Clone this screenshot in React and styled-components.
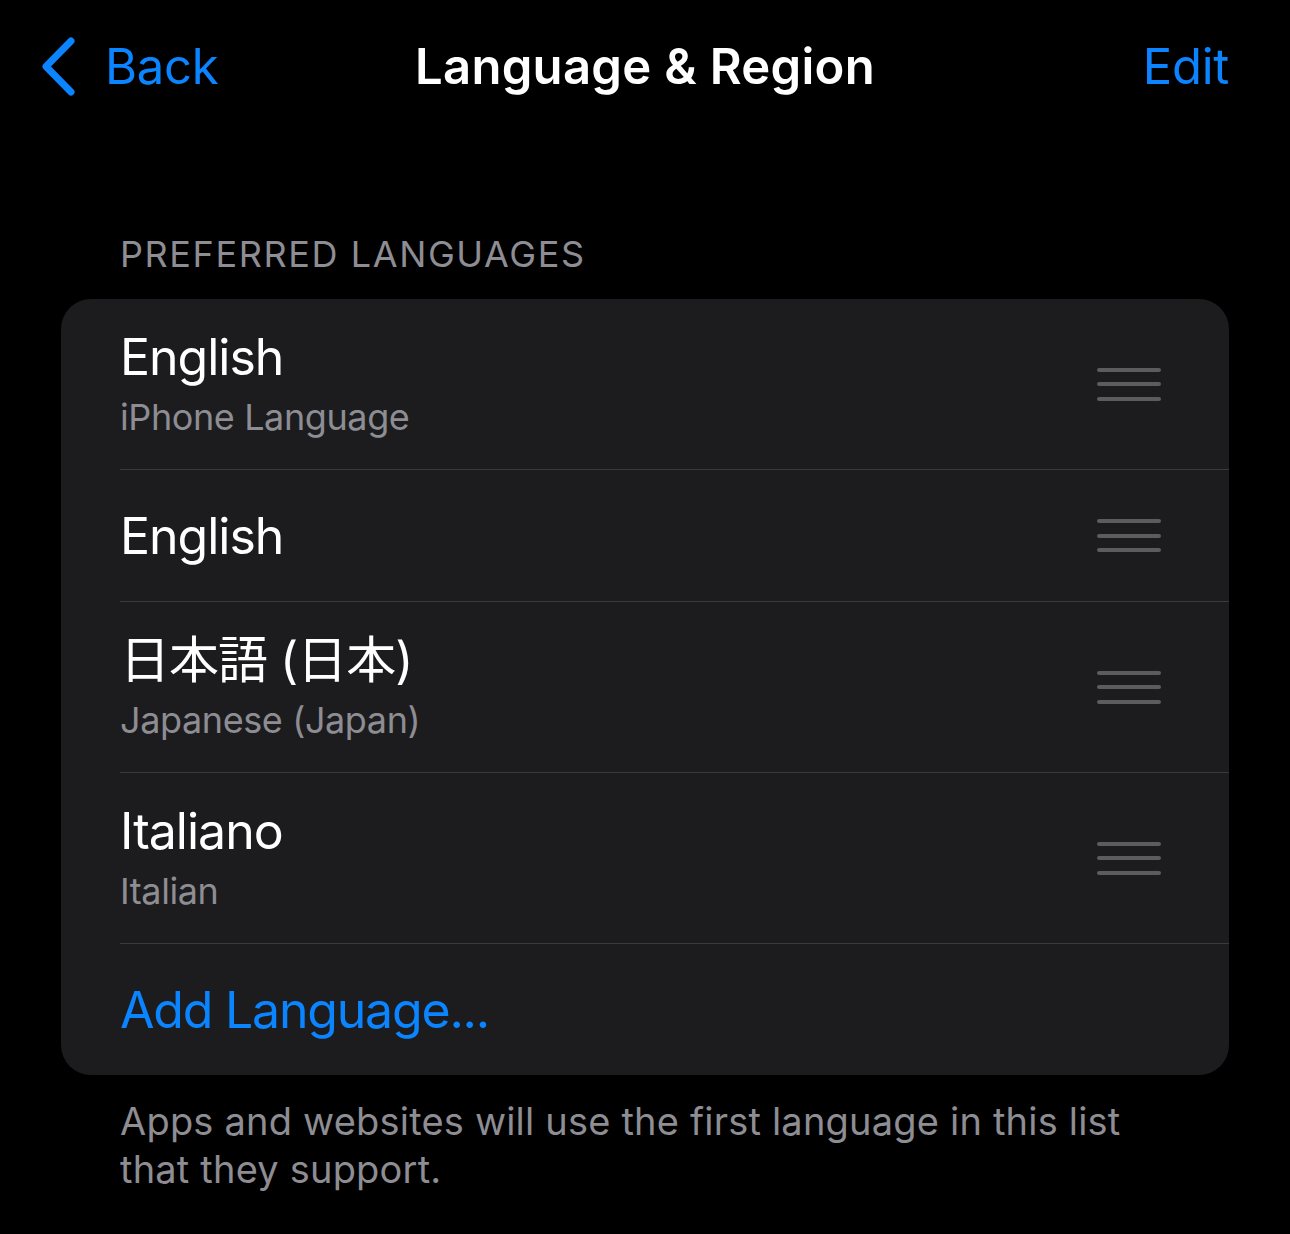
import React from 'react';
import styled, { createGlobalStyle } from 'styled-components';

const GlobalStyle = createGlobalStyle`
  html, body {
    margin: 0;
    padding: 0;
    background: #000;
  }
  body {
    font-family: Inter, "Noto Sans", "Noto Sans CJK JP", sans-serif;
    -webkit-font-smoothing: antialiased;
  }
`;

const Page = styled.div`
  width: 1290px;
  min-height: 1234px;
  background: #000;
  color: #fff;
`;

const NavBar = styled.header`
  height: 132px;
  display: grid;
  grid-template-columns: 1fr auto 1fr;
  align-items: center;
  padding: 0 40px;
`;

const BackButton = styled.div`
  display: flex;
  align-items: center;
  gap: 27px;
  color: #0a84ff;
  font-size: 49px;
  letter-spacing: -0.3px;

  svg {
    display: block;
    margin-top: 2px;
  }
`;

const Title = styled.h1`
  margin: 0;
  font-size: 49px;
  font-weight: 600;
  letter-spacing: 0.3px;
  color: #fff;
`;

const EditButton = styled.div`
  justify-self: end;
  padding-right: 21px;
  color: #0a84ff;
  font-size: 49px;
  letter-spacing: -0.3px;
`;

const Section = styled.section`
  margin: 100px 61px 0;
`;

const SectionHeader = styled.div`
  padding-left: 59px;
  font-size: 36px;
  line-height: 44px;
  letter-spacing: 1.6px;
  color: #8d8d93;
  margin-bottom: 23px;
`;

const Card = styled.div`
  background: #1c1c1e;
  border-radius: 30px;
  overflow: hidden;
`;

const Row = styled.div`
  padding-left: 59px;
`;

const RowInner = styled.div`
  display: flex;
  align-items: center;
  height: ${(p) => (p.$tall ? 170 : 131)}px;
  padding-right: 68px;
  border-bottom: ${(p) => (p.$last ? 'none' : '1.5px solid #3a3a3c')};
`;

const Labels = styled.div`
  flex: 1;
  display: flex;
  flex-direction: column;
`;

const RowTitle = styled.div`
  font-size: 50px;
  line-height: 60px;
  letter-spacing: ${(p) => (p.$accent ? '-1.2px' : '-1px')};
  color: ${(p) => (p.$accent ? '#0a84ff' : '#fff')};
`;

const RowSubtitle = styled.div`
  margin-top: 5px;
  font-size: 36px;
  line-height: 50px;
  letter-spacing: -0.4px;
  color: #8d8d93;
`;

const Handle = styled.div`
  display: flex;
  flex-direction: column;
  gap: 10.5px;
  width: 64px;

  span {
    display: block;
    height: 4px;
    border-radius: 2px;
    background: #5c5c60;
  }
`;

const Footer = styled.p`
  margin: 22px 0 0;
  padding: 0 60px 0 59px;
  font-size: 38px;
  line-height: 48px;
  letter-spacing: 0.2px;
  color: #8d8d93;
`;

const Chevron = () => (
  <svg width="38" height="60" viewBox="0 0 38 60" fill="none">
    <path
      d="M31 4 L6 29.5 L31 55"
      stroke="#0a84ff"
      strokeWidth="7"
      strokeLinecap="round"
      strokeLinejoin="round"
    />
  </svg>
);

const DragHandle = () => (
  <Handle>
    <span />
    <span />
    <span />
  </Handle>
);

const languages = [
  { title: 'English', subtitle: 'iPhone Language' },
  { title: 'English' },
  { title: '日本語 (日本)', subtitle: 'Japanese (Japan)' },
  { title: 'Italiano', subtitle: 'Italian' },
];

export default function App() {
  return (
    <Page>
      <GlobalStyle />
      <NavBar>
        <BackButton>
          <Chevron />
          Back
        </BackButton>
        <Title>Language &amp; Region</Title>
        <EditButton>Edit</EditButton>
      </NavBar>

      <Section>
        <SectionHeader>PREFERRED LANGUAGES</SectionHeader>
        <Card>
          {languages.map((lang, i) => (
            <Row key={i}>
              <RowInner $tall={!!lang.subtitle}>
                <Labels>
                  <RowTitle>{lang.title}</RowTitle>
                  {lang.subtitle && <RowSubtitle>{lang.subtitle}</RowSubtitle>}
                </Labels>
                <DragHandle />
              </RowInner>
            </Row>
          ))}
          <Row>
            <RowInner $last>
              <RowTitle $accent>Add Language...</RowTitle>
            </RowInner>
          </Row>
        </Card>
        <Footer>
          Apps and websites will use the first language in this list that they support.
        </Footer>
      </Section>
    </Page>
  );
}
